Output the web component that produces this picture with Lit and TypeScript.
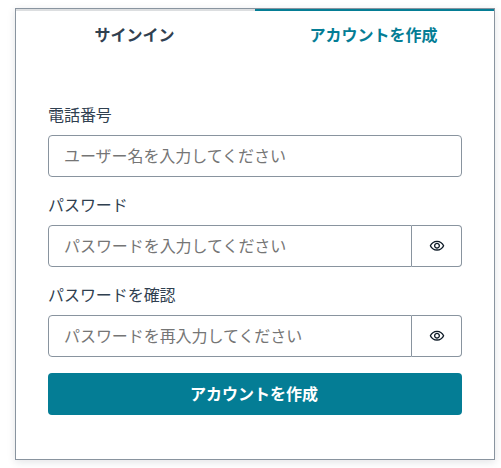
import { LitElement, html, css, nothing } from "lit";
import { customElement, property } from "lit/decorators.js";

@customElement("auth-field")
class AuthField extends LitElement {
  @property() label = "";
  @property() placeholder = "";
  @property({ type: Boolean }) secret = false;

  static styles = css`
    :host {
      display: flex;
      flex-direction: column;
      gap: 9px;
    }
    .label {
      color: #304050;
      line-height: 24px;
      letter-spacing: -0.06px;
    }
    .group {
      display: flex;
      height: 42px;
    }
    .input {
      box-sizing: border-box;
      flex: 1;
      min-width: 0;
      margin: 0;
      padding: 0 16px 2px 15px;
      border: 1px solid #89949f;
      border-radius: 4px;
      background: transparent;
      font: inherit;
      letter-spacing: -0.06px;
      color: #0d1a26;
      outline: none;
    }
    .input::placeholder {
      color: #757575;
      opacity: 1;
    }
    .joined {
      border-top-right-radius: 0;
      border-bottom-right-radius: 0;
    }
    .toggle {
      box-sizing: border-box;
      display: flex;
      align-items: center;
      justify-content: center;
      width: 50px;
      padding: 0;
      border: 1px solid #89949f;
      border-left: 0;
      border-radius: 0 4px 4px 0;
      background: transparent;
      color: #0d1a26;
    }
    .eye {
      display: block;
      width: 16px;
      height: 16px;
      fill: currentColor;
    }
  `;

  render() {
    return html`
      <label class="label" for="control">${this.label}</label>
      <div class="group">
        <input
          id="control"
          class="input ${this.secret ? "joined" : ""}"
          type=${this.secret ? "password" : "text"}
          placeholder=${this.placeholder}
        />
        ${this.secret
          ? html`<button class="toggle" type="button">
              <svg class="eye" viewBox="0 0 24 24" aria-hidden="true">
                <path
                  d="M12 6C15.79 6 19.17 8.13 20.82 11.5C19.17 14.87 15.79 17 12 17C8.21 17 4.83 14.87 3.18 11.5C4.83 8.13 8.21 6 12 6ZM12 4C7 4 2.73 7.11 1 11.5C2.73 15.89 7 19 12 19C17 19 21.27 15.89 23 11.5C21.27 7.11 17 4 12 4ZM12 9C13.38 9 14.5 10.12 14.5 11.5C14.5 12.88 13.38 14 12 14C10.62 14 9.5 12.88 9.5 11.5C9.5 10.12 10.62 9 12 9ZM12 7C9.52 7 7.5 9.02 7.5 11.5C7.5 13.98 9.52 16 12 16C14.48 16 16.5 13.98 16.5 11.5C16.5 9.02 14.48 7 12 7Z"
                />
              </svg>
            </button>`
          : nothing}
      </div>
    `;
  }
}

@customElement("app-root")
class AppRoot extends LitElement {
  static styles = css`
    :host {
      display: block;
      box-sizing: border-box;
      height: 468px;
      padding: 8px 6px 0 15px;
      overflow: hidden;
      background: #fff;
      font: 16px/24px "Noto Sans CJK JP", sans-serif;
    }
    .card {
      box-sizing: border-box;
      height: 452px;
      border: 1px solid #89949f;
      background: #fff;
      box-shadow: 0 2px 8px rgba(13, 26, 38, 0.12);
    }
    .tabs {
      display: grid;
      grid-template-columns: 1fr 1fr;
    }
    .tab {
      margin: 0;
      padding: 11px 17px 13px 15px;
      border: 0;
      border-top: 2px solid #dcdee0;
      background: transparent;
      font: inherit;
      font-weight: 700;
      color: #304050;
    }
    .active {
      border-color: #047d95;
      color: #047d95;
    }
    .form {
      display: flex;
      flex-direction: column;
      gap: 15px;
      padding: 43px 32px;
    }
    .submit {
      height: 42px;
      margin-top: 1px;
      padding: 0 2px 2px 0;
      border: 0;
      border-radius: 4px;
      background: #047d95;
      color: #fff;
      font: inherit;
      font-weight: 700;
    }
  `;

  render() {
    return html`
      <div class="card">
        <div class="tabs" role="tablist">
          <button class="tab" role="tab">サインイン</button>
          <button class="tab active" role="tab">アカウントを作成</button>
        </div>
        <form class="form">
          <auth-field label="電話番号" placeholder="ユーザー名を入力してください"></auth-field>
          <auth-field label="パスワード" placeholder="パスワードを入力してください" secret></auth-field>
          <auth-field label="パスワードを確認" placeholder="パスワードを再入力してください" secret></auth-field>
          <button class="submit" type="button">アカウントを作成</button>
        </form>
      </div>
    `;
  }
}
